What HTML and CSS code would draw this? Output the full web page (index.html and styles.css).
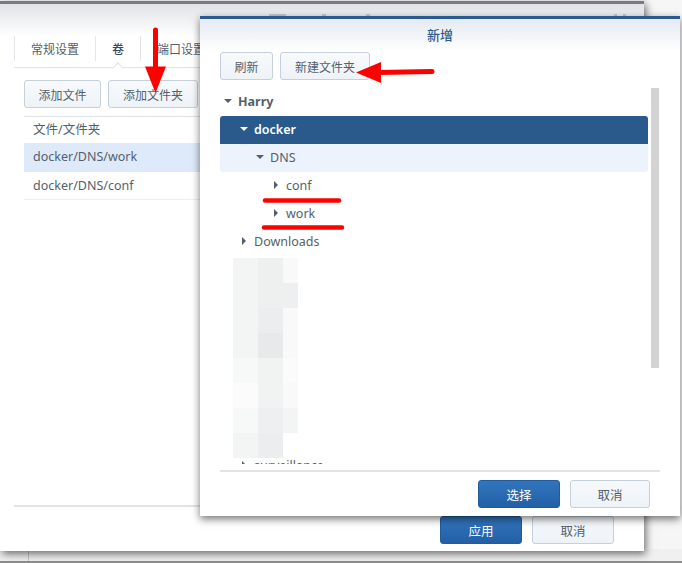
FILE: index.html
```html
<!DOCTYPE html>
<html>
<head>
    <meta charset="UTF-8">
    <title>新增</title>
    <link rel="stylesheet" href="styles.css">
</head>
<body>
    <div class="desktop">
        <div class="taskbar"><span class="taskbar-line"></span></div>

        <!-- back window -->
        <div class="win-back">
            <div class="back-head">
                <span class="head-mark mark-a"></span>
                <span class="head-mark mark-b"></span>
                <span class="head-mark mark-c"></span>
                <span class="head-mark mark-d"></span>
                <span class="head-mark mark-e"></span>
            </div>
            <div class="tabs">
                <span class="tab">常规设置</span>
                <span class="tab tab-active">卷</span>
                <span class="tab">端口设置</span>
            </div>
            <div class="toolbar back-toolbar">
                <button class="btn btn-file">添加文件</button>
                <button class="btn btn-folder">添加文件夹</button>
            </div>
            <div class="table">
                <div class="cell cell-head">文件/文件夹</div>
                <div class="cell cell-selected">docker/DNS/work</div>
                <div class="cell">docker/DNS/conf</div>
            </div>
            <div class="back-spacer"></div>
            <div class="back-foot">
                <button class="btn-big btn-primary">应用</button>
                <button class="btn-big btn-cancel">取消</button>
            </div>
        </div>

        <!-- dialog -->
        <div class="win-dialog">
            <div class="dialog-title">新增</div>
            <div class="toolbar dialog-toolbar">
                <button class="btn btn-refresh">刷新</button>
                <button class="btn btn-new">新建文件夹</button>
            </div>
            <div class="tree-wrap">
                <div class="tree">
                    <div class="row level-0 row-root"><span class="caret caret-down"></span>Harry</div>
                    <div class="row level-1 row-on"><span class="caret caret-down"></span>docker</div>
                    <div class="row level-2 row-soft"><span class="caret caret-down"></span>DNS</div>
                    <div class="row level-3"><span class="caret caret-right"></span>conf</div>
                    <div class="row level-3"><span class="caret caret-right"></span>work</div>
                    <div class="row level-1b"><span class="caret caret-right"></span>Downloads</div>
                    <div class="blur">
                        <div class="blur-row"><i class="c-f3"></i><i class="c-ee"></i><i class="c-f9"></i></div>
                        <div class="blur-row"><i class="c-f3"></i><i class="c-ee"></i><i class="c-ef"></i></div>
                        <div class="blur-row"><i class="c-f3"></i><i class="c-ed"></i><i class="c-f9"></i></div>
                        <div class="blur-row"><i class="c-f3"></i><i class="c-e9"></i><i class="c-f9"></i></div>
                        <div class="blur-row"><i class="c-f8"></i><i class="c-f1"></i><i class="c-fb"></i></div>
                        <div class="blur-row"><i class="c-fb"></i><i class="c-f1"></i><i class="c-f9"></i></div>
                        <div class="blur-row"><i class="c-f8"></i><i class="c-ef"></i><i class="c-f3"></i></div>
                        <div class="blur-row"><i class="c-f3"></i><i class="c-ed"></i></div>
                    </div>
                    <div class="row level-1b row-cut"><span class="caret caret-right"></span>surveillance</div>
                </div>
                <div class="scrollbar"></div>
            </div>
            <div class="dialog-foot">
                <button class="btn-big btn-primary">选择</button>
                <button class="btn-big btn-cancel">取消</button>
            </div>
        </div>

        <!-- red marks drawn on top of the screenshot -->
        <svg class="marks" width="682" height="563" viewBox="0 0 682 563">
            <path d="M155.500 30V70" stroke="#f00" stroke-width="5" stroke-linecap="round" fill="none"/>
            <path d="M145 66.500H166L155.500 93Z" fill="#f00"/>
            <path d="M432 71.500L378 72.500" stroke="#f00" stroke-width="5" stroke-linecap="round" fill="none"/>
            <path d="M381 62L356 72.500L381 83Z" fill="#f00"/>
            <path d="M265 200.500H339" stroke="#f00" stroke-width="4.500" stroke-linecap="round" fill="none"/>
            <path d="M264 227.500H342" stroke="#f00" stroke-width="4.500" stroke-linecap="round" fill="none"/>
        </svg>
    </div>
</body>
</html>
```

FILE: styles.css
```css
* {
    box-sizing: border-box;
}
body {
    margin: 0;
    background-color: #fff;
    font-family: "Noto Sans CJK SC", "Liberation Sans", sans-serif;
    color: #555f6b;
    overflow: hidden;
}
.desktop {
    position: relative;
    width: 682px;
    height: 563px;
    overflow: hidden;
    background-color: #f6f6f6;
}
button {
    font-family: inherit;
    padding: 0;
    cursor: pointer;
}

/* strip under the back window */
.taskbar {
    position: absolute;
    left: 0;
    right: 0;
    bottom: 0;
    height: 14px;
    background-color: #f0f0f0;
    border-bottom: 2px solid #8c8c8c;
}
.taskbar-line {
    display: block;
    width: 1px;
    height: 12px;
    margin-left: 28px;
    background-color: #c8c8c8;
}

/* back window */
.win-back {
    position: absolute;
    left: 0;
    top: 1px;
    width: 644px;
    height: 550px;
    display: flex;
    flex-direction: column;
    background-color: #fff;
    border-top: 3px solid #787c82;
    box-shadow: 2px 3px 8px rgba(0, 0, 0, 0.55);
}
.back-head {
    position: relative;
    height: 32px;
    background: linear-gradient(to bottom, #e1e3e6, #fff);
}
.head-mark {
    position: absolute;
    top: 10px;
    height: 2px;
    background-color: #c4c7cb;
}
.mark-a {
    left: 269px;
    width: 17px;
}
.mark-b {
    left: 322px;
    width: 4px;
}
.mark-c {
    left: 366px;
    width: 4px;
}
.mark-d {
    left: 614px;
    width: 3px;
}
.mark-e {
    left: 623px;
    width: 3px;
}
.tabs {
    display: flex;
    height: 32px;
    margin-left: 14px;
    border-bottom: 1px solid #dfe3e8;
    font-size: 12px;
}
.tab {
    position: relative;
    display: flex;
    align-items: center;
    justify-content: center;
    height: 25px;
    width: 81px;
    border-left: 1px solid #e3e6ea;
}
.tab-active {
    width: 45px;
    color: #3a4a5c;
    font-weight: 500;
}
.tab-active::after {
    content: "";
    position: absolute;
    left: 18px;
    top: 28px;
    width: 7px;
    height: 7px;
    background-color: #fff;
    border-left: 1px solid #dfe3e8;
    border-top: 1px solid #dfe3e8;
    transform: rotate(45deg);
}
.toolbar {
    display: flex;
    gap: 7px;
}
.back-toolbar {
    margin: 12px 0 0 24px;
}
.btn {
    height: 28px;
    border: 1px solid #c6d0dc;
    border-radius: 3px;
    background: linear-gradient(to bottom, #f8fafc, #eef3f8);
    color: #555f6b;
    font-size: 12px;
}
.btn-file {
    width: 77px;
}
.btn-folder {
    width: 90px;
}
.table {
    margin: 8px 0 0 24px;
    border-top: 1px solid #dfe3e8;
    font-size: 12.500px;
    font-family: "Noto Sans", "Noto Sans CJK SC", sans-serif;
}
.cell {
    height: 28px;
    line-height: 27px;
    padding-left: 9px;
    border-bottom: 1px solid #eceef1;
}
.cell-head {
    height: 26px;
    line-height: 26px;
    border-bottom: none;
}
.cell-selected {
    height: 29px;
    line-height: 28px;
    background-color: #deeafa;
    border-bottom: none;
}
.back-spacer {
    flex: 1;
    margin-left: 14px;
    border-bottom: 2px solid #e3e3e3;
    margin-bottom: 9px;
}
.back-foot {
    display: flex;
    justify-content: flex-end;
    gap: 10px;
    height: 35px;
    padding-right: 30px;
}
.btn-big {
    width: 82px;
    height: 28px;
    border-radius: 3px;
    font-size: 12.500px;
}
.btn-primary {
    border: 1px solid #1f5c9e;
    background: linear-gradient(to bottom, #3275bd, #2260a6);
    color: #fff;
}
.btn-cancel {
    border: 1px solid #c6d0dc;
    background: linear-gradient(to bottom, #f6f9fc, #eef3f8);
    color: #555f6b;
}
.dialog-foot .btn-cancel {
    width: 80px;
}

/* dialog */
.win-dialog {
    position: absolute;
    left: 200px;
    top: 16px;
    width: 480px;
    height: 500px;
    display: flex;
    flex-direction: column;
    background-color: #fff;
    border-top: 3px solid #2a5a8e;
    box-shadow: 0 3px 8px rgba(0, 0, 0, 0.55);
}
.dialog-title {
    height: 33px;
    line-height: 31px;
    text-align: center;
    font-size: 13px;
    font-weight: 500;
    color: #2a5a8e;
    background: linear-gradient(to bottom, #e4eaf1, #fff);
}
.dialog-toolbar {
    margin: 0 0 0 20px;
}
.btn-refresh {
    width: 53px;
}
.btn-new {
    width: 90px;
}
.tree-wrap {
    position: relative;
    flex: 1;
    margin: 8px 20px 0 20px;
    padding-bottom: 7px;
    border-bottom: 2px solid #e3e3e3;
    overflow: hidden;
}
.tree {
    width: 428px;
    height: 376px;
    overflow: hidden;
    font-size: 12.500px;
    font-family: "Noto Sans", "Liberation Sans", sans-serif;
}
.scrollbar {
    position: absolute;
    left: 431px;
    top: 0;
    width: 8px;
    height: 280px;
    background-color: #d3d3d3;
}
.row {
    display: flex;
    align-items: center;
    height: 28px;
    padding-bottom: 2px;
}
.row-root {
    font-weight: 700;
}
.row-on {
    background-color: #2a5a8c;
    color: #fff;
    font-weight: 600;
    border-radius: 3px 3px 0 0;
}
.row-soft {
    background-color: #ecf3fd;
    border-radius: 0 0 3px 3px;
}
.level-0 {
    padding-left: 4px;
}
.level-1 {
    padding-left: 20px;
}
.level-1b {
    padding-left: 22px;
}
.level-2 {
    padding-left: 36px;
}
.level-3 {
    padding-left: 54px;
}
.caret {
    width: 0;
    height: 0;
}
.caret-down {
    margin-right: 6px;
    border-left: 4px solid transparent;
    border-right: 4px solid transparent;
    border-top: 4px solid currentColor;
}
.caret-right {
    border-top: 4px solid transparent;
    border-bottom: 4px solid transparent;
    border-left: 4px solid currentColor;
    margin-right: 8px;
}
.blur {
    margin: 2px 0 0 13px;
    height: 200px;
}
.blur-row {
    display: flex;
    height: 25px;
}
.blur-row i {
    display: block;
    height: 25px;
    width: 25px;
}
.blur-row i:nth-child(3) {
    width: 15px;
}
.c-f3 {
    background-color: #f3f4f4;
}
.c-ee {
    background-color: #eeefef;
}
.c-f9 {
    background-color: #f9f9f9;
}
.c-ef {
    background-color: #eeeff1;
}
.c-ed {
    background-color: #ecedee;
}
.c-e9 {
    background-color: #e8e9ea;
}
.c-f8 {
    background-color: #f7f8f8;
}
.c-f1 {
    background-color: #f1f2f2;
}
.c-fb {
    background-color: #fbfbfb;
}
.row-cut {
    margin-top: -6px;
}
.dialog-foot {
    display: flex;
    justify-content: flex-end;
    gap: 10px;
    padding: 8px 30px 0 0;
    height: 44px;
}

.marks {
    position: absolute;
    left: 0;
    top: 0;
}
```
